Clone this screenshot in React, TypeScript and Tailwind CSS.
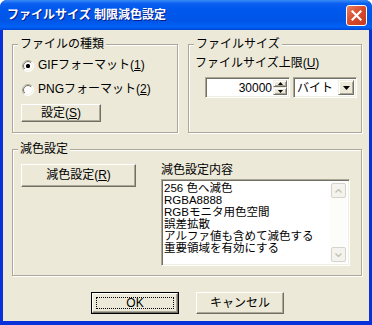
import React from 'react';

const font = "font-['Liberation_Sans','Noto_Sans_CJK_JP',sans-serif]";

function GroupBox({ title, className, children }: { title: string; className?: string; children?: React.ReactNode }) {
  return (
    <div className={`relative border border-[#ACA899] shadow-[1px_1px_0_#fff,inset_1px_1px_0_#fff] ${className ?? ''}`}>
      <span className="absolute -top-[7px] left-[5px] bg-[#ECE9D8] px-[2px] leading-[13px]">{title}</span>
      {children}
    </div>
  );
}

function Btn({ children, className, isDefault }: { children: React.ReactNode; className?: string; isDefault?: boolean }) {
  const inner = (
    <div className="flex h-full w-full items-center justify-center border border-t-white border-l-white border-r-[#716F64] border-b-[#716F64] bg-[#ECE9D8] shadow-[inset_-1px_-1px_0_#ACA899]">
      {isDefault ? (
        <div className="flex h-[calc(100%-6px)] w-[calc(100%-6px)] items-center justify-center border border-dotted border-black">
          {children}
        </div>
      ) : (
        children
      )}
    </div>
  );
  return <div className={`${isDefault ? 'border border-black' : ''} ${className ?? ''}`}>{inner}</div>;
}

function Radio({ checked }: { checked?: boolean }) {
  return (
    <svg width="12" height="12" viewBox="0 0 12 12">
      <defs>
        <linearGradient id="ro" x1="0" y1="0" x2="1" y2="1">
          <stop offset="0.5" stopColor="#ACA899" />
          <stop offset="0.5" stopColor="#ffffff" />
        </linearGradient>
        <linearGradient id="ri" x1="0" y1="0" x2="1" y2="1">
          <stop offset="0.5" stopColor="#716F64" />
          <stop offset="0.5" stopColor="#F1EFE2" />
        </linearGradient>
      </defs>
      <circle cx="6" cy="6" r="5.5" fill="white" stroke="url(#ro)" />
      <circle cx="6" cy="6" r="4.5" fill="white" stroke="url(#ri)" />
      {checked && <rect x="4" y="4" width="4" height="4" rx="1.5" fill="black" />}
    </svg>
  );
}

const sunken =
  'border border-t-[#ACA899] border-l-[#ACA899] border-r-white border-b-white shadow-[inset_1px_1px_0_#716F64,inset_-1px_-1px_0_#F1EFE2]';

const raised =
  'border border-t-[#F1EFE2] border-l-[#F1EFE2] border-r-[#716F64] border-b-[#716F64] bg-[#ECE9D8] shadow-[inset_1px_1px_0_#fff,inset_-1px_-1px_0_#ACA899]';

function ScrollArrow({ up }: { up?: boolean }) {
  return (
    <div className="flex h-[15px] w-[15px] items-center justify-center rounded-[2px] border border-[#D6D3CA] bg-[#F4F3EE]">
      <svg width="7" height="4" viewBox="0 0 7 4">
        <path d={up ? 'M0.5 3.5 L3.5 0.5 L6.5 3.5' : 'M0.5 0.5 L3.5 3.5 L6.5 0.5'} fill="none" stroke="#C5C2B2" strokeWidth="1.4" />
      </svg>
    </div>
  );
}

export default function App() {
  const items = ['256 色へ減色', 'RGBA8888', 'RGBモニタ用色空間', '誤差拡散', 'アルファ値も含めて減色する', '重要領域を有効にする'];

  return (
    <div className={`flex h-[325px] w-[372px] flex-col overflow-hidden rounded-t-[7px] bg-[#0831D9] text-[12px] text-black ${font}`}>
      {/* タイトルバー */}
      <div className="flex h-[30px] items-center bg-[linear-gradient(to_bottom,#3A8CF8_0%,#0A5FEF_12%,#0058EE_30%,#0055E6_70%,#0062F6_90%,#0046D5_100%)] pl-[7px] pr-[5px]">
        <span className="flex-1 text-[12px] font-bold leading-[14px] text-white [text-shadow:1px_1px_0_#0A1E8C]">
          ファイルサイズ 制限減色設定
        </span>
        <div className="flex h-[21px] w-[21px] items-center justify-center rounded-[3px] border border-white bg-[linear-gradient(135deg,#E8805F_0%,#D8492A_50%,#C53A1E_100%)]">
          <svg width="11" height="11" viewBox="0 0 11 11">
            <path d="M1.5 1.5 L9.5 9.5 M9.5 1.5 L1.5 9.5" stroke="white" strokeWidth="2.2" strokeLinecap="square" />
          </svg>
        </div>
      </div>

      <div className="mx-[3px] mb-[4px] flex h-[291px] flex-col bg-[#ECE9D8] pl-[9px] pt-[14px]">
        <div className="flex gap-[10px]">
          <GroupBox title="ファイルの種類" className="h-[89px] w-[166px]">
            <div className="flex flex-col pl-[9px] pt-[14px]">
              <div className="flex h-[13px] items-center gap-[4px] leading-[13px]">
                <Radio checked />
                <span>GIFフォーマット(<u>1</u>)</span>
              </div>
              <div className="mt-[11px] flex h-[13px] items-center gap-[4px] leading-[13px]">
                <Radio />
                <span>PNGフォーマット(<u>2</u>)</span>
              </div>
              <Btn className="-ml-[1px] mt-[8px] h-[18px] w-[80px]">
                <span className="leading-[13px]">設定(<u>S</u>)</span>
              </Btn>
            </div>
          </GroupBox>

          <GroupBox title="ファイルサイズ" className="h-[89px] w-[174px]">
            <div className="flex flex-col pl-[6px] pt-[12px]">
              <span className="leading-[13px]">ファイルサイズ上限(<u>U</u>)</span>
              <div className="ml-[10px] mt-[7px] flex">
                <div className={`flex h-[21px] w-[85px] bg-white p-[2px] ${sunken}`}>
                  <span className="flex-1 pr-[1px] text-right leading-[17px]">30000</span>
                  <div className="flex w-[14px] flex-col">
                    <div className={`flex h-[8px] items-center justify-center ${raised}`}>
                      <svg width="5" height="3" viewBox="0 0 5 3"><path d="M0 3 L2.5 0 L5 3 Z" fill="black" /></svg>
                    </div>
                    <div className={`flex h-[9px] items-center justify-center ${raised}`}>
                      <svg width="5" height="3" viewBox="0 0 5 3"><path d="M0 0 L2.5 3 L5 0 Z" fill="black" /></svg>
                    </div>
                  </div>
                </div>
                <div className={`ml-[3px] flex h-[21px] w-[64px] bg-white p-[2px] ${sunken}`}>
                  <span className="flex-1 pl-[1px] leading-[17px]">バイト</span>
                  <div className={`flex w-[16px] items-center justify-center ${raised}`}>
                    <svg width="7" height="4" viewBox="0 0 7 4"><path d="M0 0 L7 0 L3.5 4 Z" fill="black" /></svg>
                  </div>
                </div>
              </div>
            </div>
          </GroupBox>
        </div>

        <GroupBox title="減色設定" className="mt-[16px] h-[127px] w-[350px]">
          <div className="flex pl-[8px] pt-[14px]">
            <Btn className="h-[23px] w-[115px]">
              <span className="leading-[13px]">減色設定(<u>R</u>)</span>
            </Btn>
            <div className="ml-[25px] flex flex-col">
              <span className="h-[13px] leading-[13px]">減色設定内容</span>
              <div className={`mt-[2px] flex h-[87px] w-[189px] bg-white p-[2px] ${sunken}`}>
                <div className="flex flex-1 flex-col text-[11.5px]">
                  {items.map(t => (
                    <span key={t} className="h-[12px] whitespace-nowrap leading-[12px]">{t}</span>
                  ))}
                </div>
                <div className="flex w-[17px] flex-col items-center justify-between bg-[#FCFCFA] py-[1px]">
                  <ScrollArrow up />
                  <ScrollArrow />
                </div>
              </div>
            </div>
          </div>
        </GroupBox>

        <div className="ml-[79px] mt-[16px] flex">
          <Btn isDefault className="h-[22px] w-[88px]">
            <span className="leading-[13px]">OK</span>
          </Btn>
          <Btn className="ml-[17px] h-[22px] w-[88px]">
            <span className="leading-[13px]">キャンセル</span>
          </Btn>
        </div>
      </div>
    </div>
  );
}
